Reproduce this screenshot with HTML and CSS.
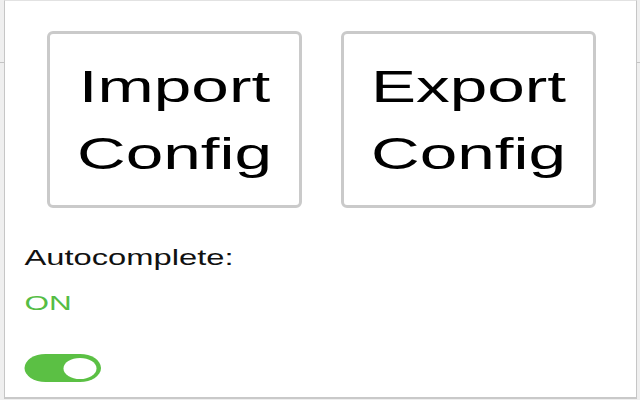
FILE: index.html
```html
<!DOCTYPE html>
<html>
<head>
<meta charset="utf-8">
<link rel="stylesheet" href="styles.css">
</head>
<body>
<div class="popup">
  <div class="content">
    <div class="buttons">
      <button class="btn">Import<br>Config</button>
      <button class="btn">Export<br>Config</button>
    </div>
    <div class="label">Autocomplete:</div>
    <div class="state">ON</div>
    <div class="toggle"><span class="knob"></span></div>
  </div>
</div>
</body>
</html>
```

FILE: styles.css
```css
html, body {
  margin: 0;
  padding: 0;
  width: 640px;
  height: 400px;
  overflow: hidden;
}
body {
  background: linear-gradient(to bottom, #efefef 0, #efefef 62px, #c4c4c4 62px, #c4c4c4 63px, #efefef 63px);
  font-family: "Liberation Sans", Arial, sans-serif;
  padding-left: 4px;
  box-sizing: border-box;
}
.popup {
  width: 633px;
  height: 399px;
  box-sizing: border-box;
  background: #fff;
  border-left: 1px solid #c6c6c6;
  border-right: 1px solid #c6c6c6;
  border-top: 1px solid #e2e2e2;
  border-bottom: 2px solid #c9c9c9;
  overflow: hidden;
}
.content {
  width: 420px;
  transform: scaleX(1.5);
  transform-origin: 0 0;
  padding-left: 13px;
  padding-top: 30px;
}
.buttons {
  display: flex;
  gap: 26px;
  margin-left: 15px;
}
.btn {
  width: 170px;
  height: 177px;
  box-sizing: border-box;
  border-style: solid;
  border-color: #cacaca;
  border-width: 3px 2px;
  border-radius: 4px / 6px;
  background: #fff;
  font-family: "Liberation Sans", Arial, sans-serif;
  font-size: 45px;
  line-height: 67px;
  color: #000;
  padding: 0;
  text-align: center;
}
.label {
  margin-top: 37px;
  font-size: 21.8px;
  line-height: 26px;
  color: #111;
}
.state {
  margin-top: 19px;
  font-size: 21px;
  line-height: 26px;
  color: #55bd45;
}
.toggle {
  margin-top: 38px;
  width: 51px;
  height: 28px;
  border-radius: 14px;
  background: #5bc044;
  display: flex;
  align-items: center;
  justify-content: flex-end;
  padding-right: 3px;
  box-sizing: border-box;
}
.knob {
  width: 22px;
  height: 21px;
  border-radius: 50%;
  background: #fff;
}
```
